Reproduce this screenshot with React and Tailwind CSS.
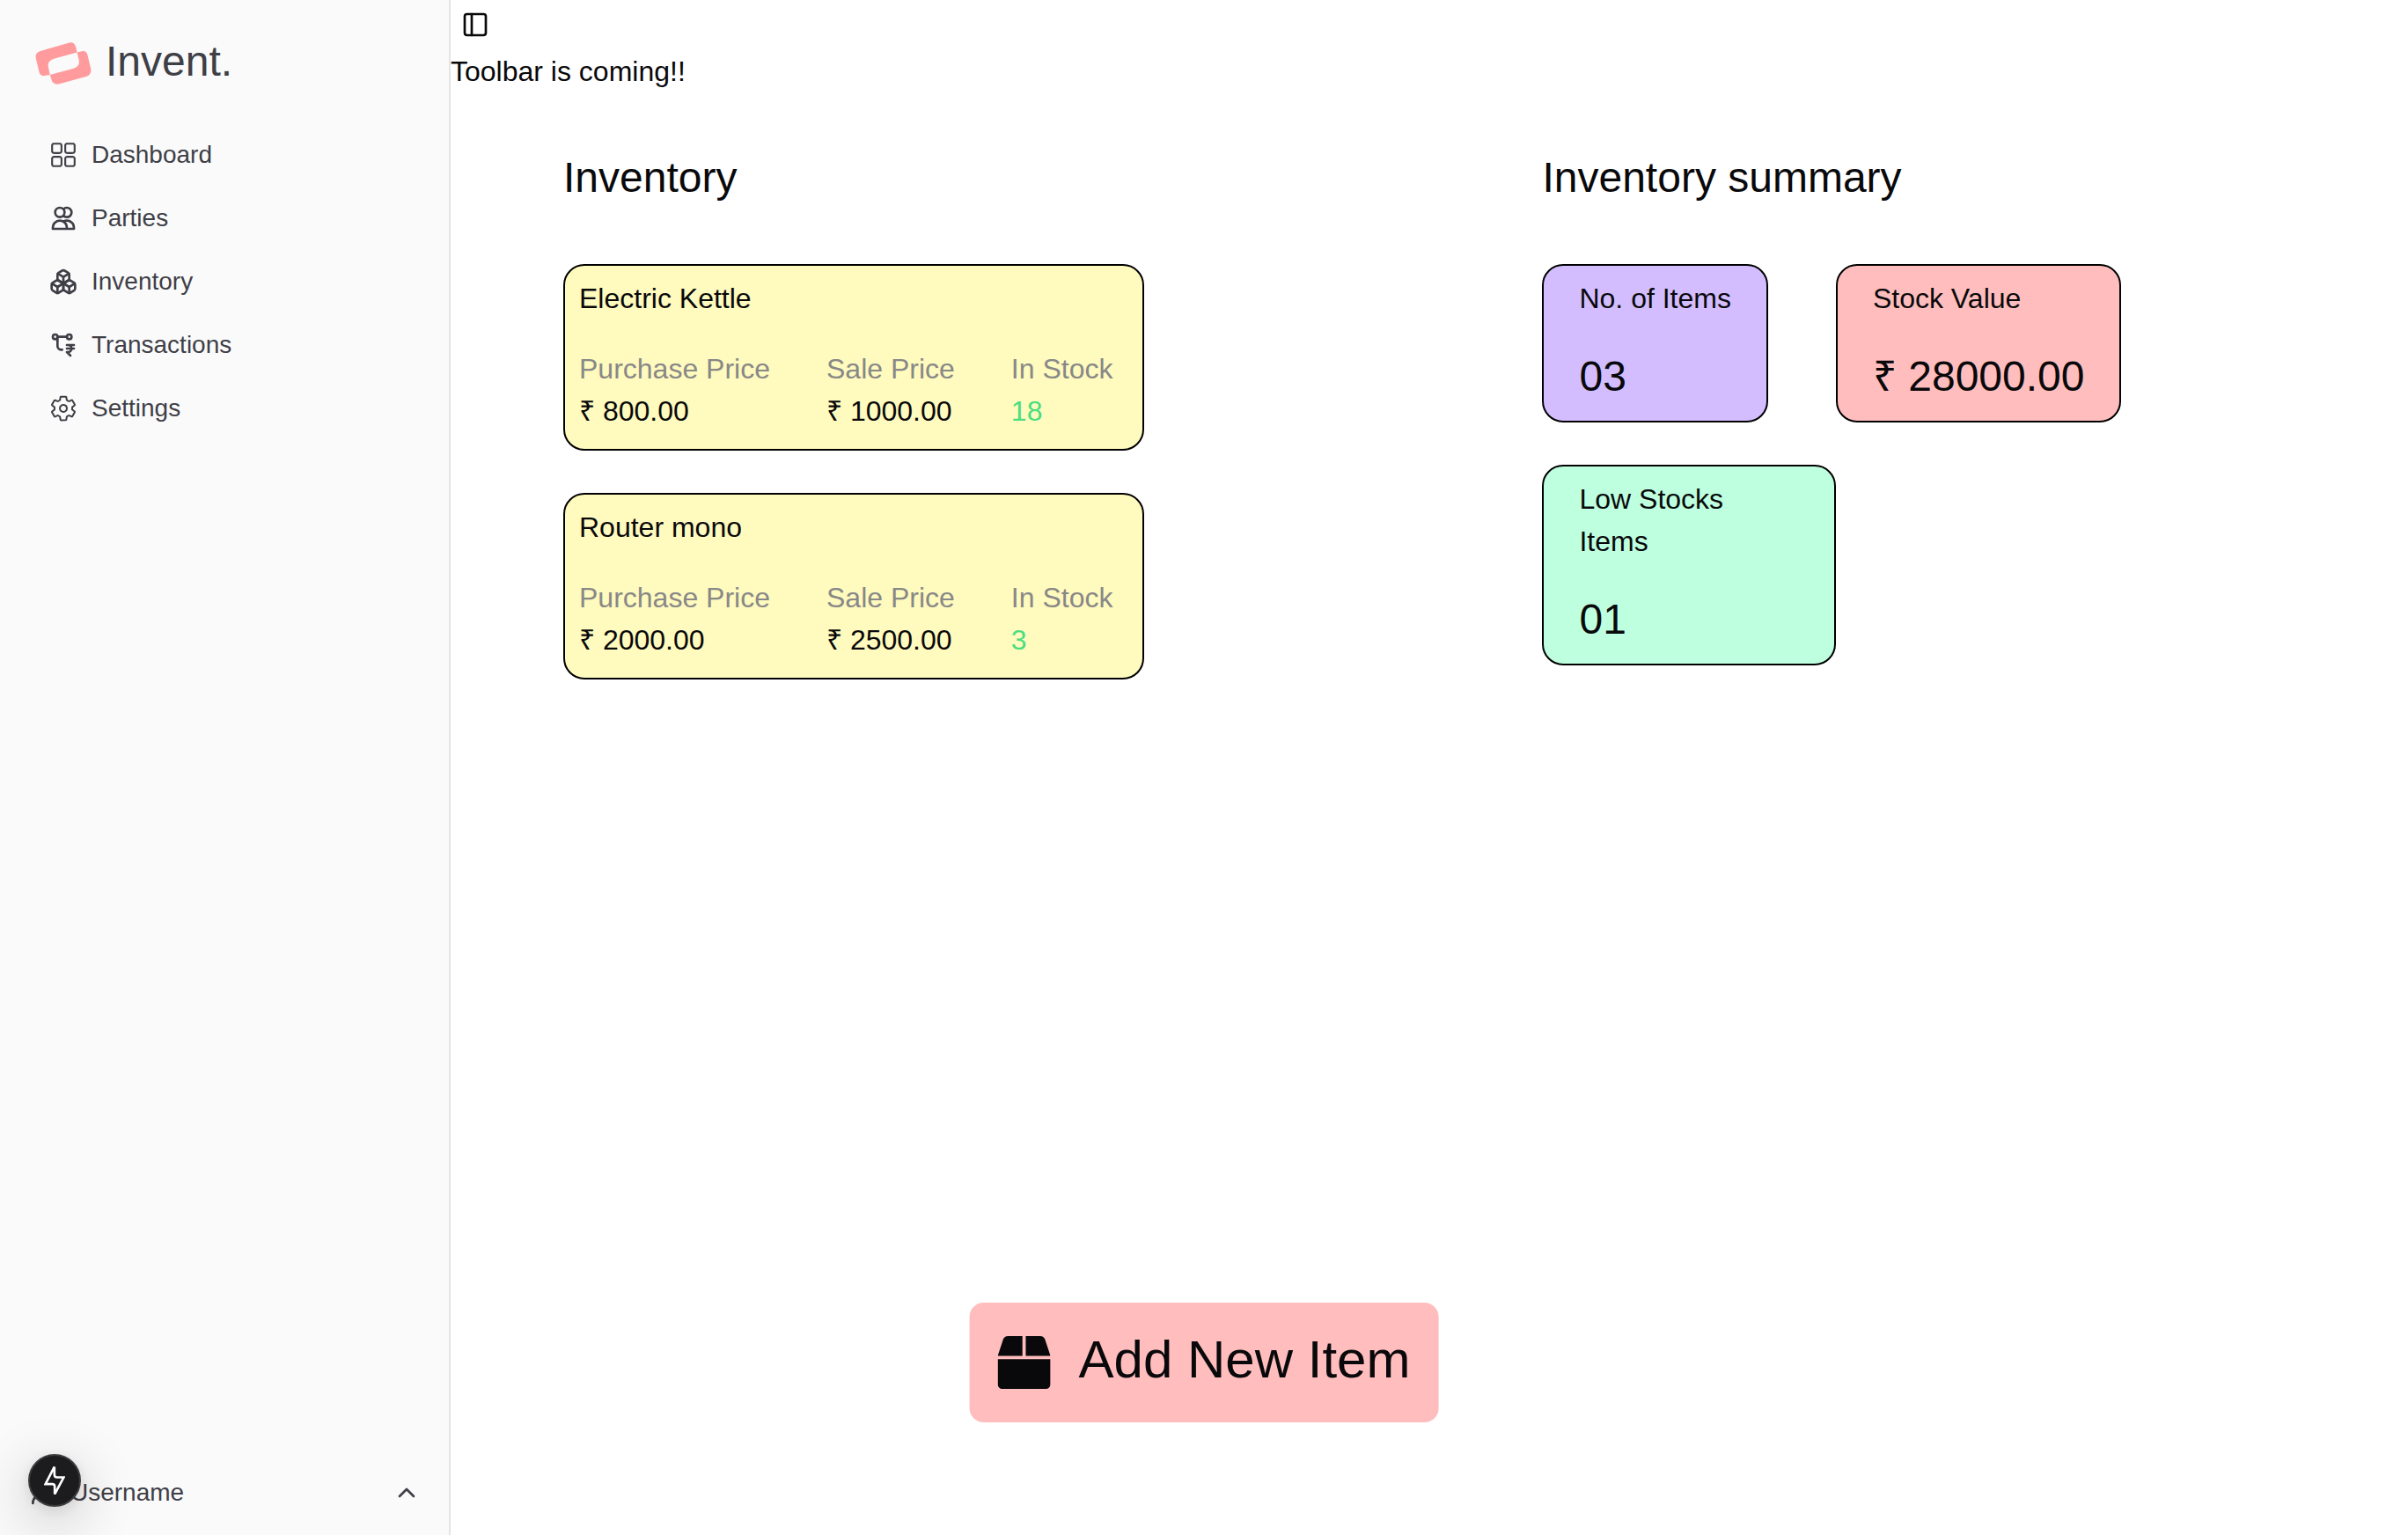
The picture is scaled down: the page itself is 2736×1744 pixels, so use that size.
import { LuBoxes, LuPanelLeft, LuChevronUp, LuUserRound } from "react-icons/lu";
import { RxDashboard } from "react-icons/rx";
import { TbTransactionRupee } from "react-icons/tb";
import { IoSettingsOutline } from "react-icons/io5";
import { HiOutlineUsers } from "react-icons/hi";
import { FaBox } from "react-icons/fa";

function Logo() {
  return (
    <svg className="mt-1 h-12 w-16" viewBox="30 35 190 145" fill="#ff9b9d" aria-hidden="true">
      <path d="M79 147 60 150Q46 152 42 138L31 92Q26 71 46 65L143 37Q163 32 168 52L172 70 95 91Q69 99 73 118Z" />
      <path d="M172 70 188 66Q204 62 208 79L219 125Q223 147 203 153L112 178Q89 183 84 163L79 147 158 126Q184 118 178 95Z" />
    </svg>
  );
}

const nav = [
  ["Dashboard", RxDashboard],
  ["Parties", HiOutlineUsers],
  ["Inventory", LuBoxes],
  ["Transactions", TbTransactionRupee],
  ["Settings", IoSettingsOutline],
];

const items = [
  { name: "Electric Kettle", purchase: "₹ 800.00", sale: "₹ 1000.00", stock: 18 },
  { name: "Router mono", purchase: "₹ 2000.00", sale: "₹ 2500.00", stock: 3 },
];

function Field({ label, value, valueClass = "" }) {
  return (
    <div>
      <dt className="text-[#888888]">{label}</dt>
      <dd className={valueClass}>{value}</dd>
    </div>
  );
}

function ItemCard({ item }) {
  return (
    <article className="rounded-3xl border-2 border-black bg-[#fffabd] pt-[13px] pr-[34px] pb-[19px] pl-4">
      <h2>{item.name}</h2>
      <dl className="mt-8 flex gap-16">
        <Field label="Purchase Price" value={item.purchase} />
        <Field label="Sale Price" value={item.sale} />
        <Field label="In Stock" value={item.stock} valueClass="text-[#4ade80]" />
      </dl>
    </article>
  );
}

function SummaryCard({ label, value, className }) {
  return (
    <article className={"rounded-3xl border-2 border-black px-10 pt-[13px] pb-[17px] " + className}>
      <h2 className="max-w-52">{label}</h2>
      <p className="mt-8 text-5xl leading-[66px]">{value}</p>
    </article>
  );
}

export default function App() {
  return (
    <div className="flex min-h-screen bg-white font-['Liberation_Sans',Arial,sans-serif] text-[32px] leading-12 text-zinc-950">
      <aside className="flex w-128 shrink-0 flex-col border-r-2 border-[#e5e5e5] bg-[#fafafa] text-[28px] leading-10 text-zinc-700">
        <div className="flex items-center gap-4 px-10 pt-[38px] pb-[42px]">
          <Logo />
          <span className="text-5xl leading-16">Invent.</span>
        </div>
        <nav className="flex flex-col gap-2 px-10">
          {nav.map(([label, Icon]) => (
            <a key={label} href="#" className="flex h-16 items-center gap-4 px-4">
              <Icon className="size-8 shrink-0" />
              {label}
            </a>
          ))}
        </nav>
        <button type="button" className="mx-4 mt-auto mb-4 flex h-16 items-center gap-4 px-4 text-left">
          <LuUserRound className="size-8 shrink-0" />
          <span className="flex-1">Username</span>
          <LuChevronUp className="size-8 shrink-0" />
        </button>
      </aside>

      <main className="min-w-0 flex-1">
        <button type="button" aria-label="Toggle sidebar" className="flex size-14 items-center justify-center">
          <LuPanelLeft className="size-8" />
        </button>
        <p className="leading-[50px]">Toolbar is coming!!</p>
        <div className="flex gap-[452px] px-32 pt-16">
          <section>
            <h1 className="text-5xl leading-16">Inventory</h1>
            <div className="mt-[66px] flex flex-col gap-12">
              {items.map((item) => (
                <ItemCard key={item.name} item={item} />
              ))}
            </div>
          </section>
          <section>
            <h1 className="text-5xl leading-16">Inventory summary</h1>
            <div className="mt-[66px] flex items-start gap-[77px]">
              <SummaryCard label="No. of Items" value="03" className="bg-[#d3bdff]" />
              <SummaryCard label="Stock Value" value="₹ 28000.00" className="bg-[#ffbdbd]" />
            </div>
            <div className="mt-12 flex">
              <SummaryCard label="Low Stocks Items" value="01" className="w-[334px] bg-[#bdffdf]" />
            </div>
          </section>
        </div>
      </main>

      <button type="button" className="fixed bottom-32 left-1/2 flex h-34 -translate-x-1/2 items-center gap-8 rounded-2xl bg-[#ffbdbd] px-8 text-6xl whitespace-nowrap">
        <FaBox />
        <span className="pb-1.5">Add New Item</span>
      </button>

      <button type="button" aria-label="Developer tools" className="fixed bottom-8 left-8 flex size-15 items-center justify-center rounded-full border-2 border-[#3c3c3e] bg-[#1c1c1e] shadow-[0_4px_16px_rgba(0,0,0,0.1),0_16px_64px_rgba(0,0,0,0.24)]">
        <svg className="h-8 w-6" viewBox="150 198 73 95" fill="none" stroke="white" strokeWidth="8" aria-hidden="true">
          <path d="M186 198V226Q186 235 195 235H218L187 293V266Q187 258 178 258H155L186 198" />
        </svg>
      </button>
    </div>
  );
}
